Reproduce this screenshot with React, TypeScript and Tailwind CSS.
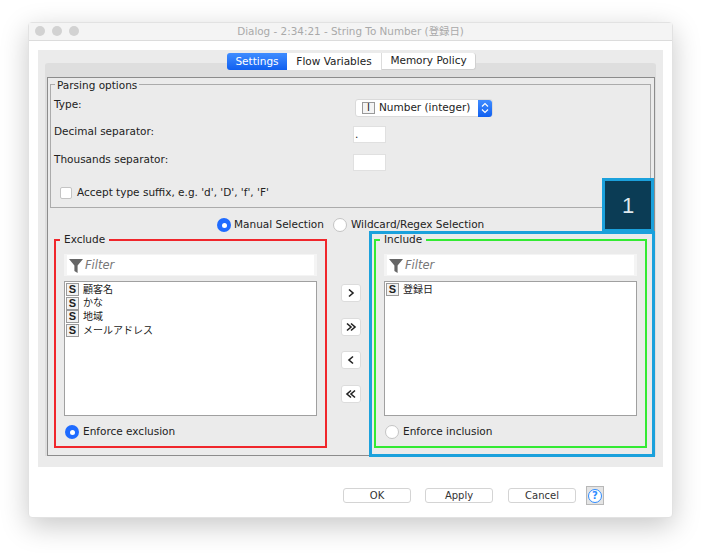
const FONT = "font-['DejaVu_Sans','Noto_Sans_CJK_JP',sans-serif]";

const Radio = ({ on }: { on?: boolean }) =>
  on ? (
    <span className="flex h-[14px] w-[14px] shrink-0 items-center justify-center rounded-full bg-[#1f6bff]">
      <span className="h-[5px] w-[5px] rounded-full bg-white" />
    </span>
  ) : (
    <span className="h-[14px] w-[14px] shrink-0 rounded-full border border-[#c4c4c4] bg-white" />
  );

const FunnelIcon = () => (
  <svg width="14" height="15" viewBox="0 0 14 15" className="shrink-0">
    <path d="M0 1h14L8.6 7.4V15L5.4 13V7.4z" fill="#666" />
  </svg>
);

const ColumnRow = ({ name }: { name: string }) => (
  <div className="flex h-[13.6px] items-center">
    <span className="ml-[1px] flex h-[13px] w-[13px] items-center justify-center border border-[#9a9a9a] bg-[#f2f2f2] font-['Liberation_Sans'] text-[11px] leading-none font-bold text-[#222]">
      S
    </span>
    <span className="ml-[4px] text-[10px] leading-none text-[#222]">{name}</span>
  </div>
);

const ColumnBox = ({
  title,
  color,
  items,
  enforce,
  on,
}: {
  title: string;
  color: string;
  items: string[];
  enforce: string;
  on?: boolean;
}) => (
  <div className={`relative h-[209px] w-[273px] border-2 ${color} px-[8px] pt-[13px]`}>
    <span className="absolute top-[-9px] left-[4px] bg-[#ebebeb] px-[4px] text-[10.5px] leading-[14px] text-[#222]">{title}</span>
    <div className="flex h-[22px] items-center gap-[2px] border-x-[3px] border-y border-[#f4f4f4] bg-white pt-[1px] pl-[2px] text-[11.5px] text-[#777] italic">
      <FunnelIcon />
      Filter
    </div>
    <div className="mt-[5px] h-[135px] border border-[#a0a0a0] bg-white pt-[1px]">
      {items.map((item) => (
        <ColumnRow key={item} name={item} />
      ))}
    </div>
    <div className="mt-[9px] flex h-[14px] items-center gap-[4px] pl-[1px] text-[10.5px] text-[#222]">
      <Radio on={on} />
      {enforce}
    </div>
  </div>
);

const ArrowButton = ({ d }: { d: string }) => (
  <div className="flex h-[18px] w-[20px] items-center justify-center rounded-[3px] border border-[#dcdcdc] bg-white">
    <svg width="12" height="10" viewBox="0 0 12 10" fill="none" stroke="#222" strokeWidth="1.6">
      <path d={d} />
    </svg>
  </div>
);

const FooterButton = ({ label }: { label: string }) => (
  <div className="flex h-[15px] w-[68px] items-center justify-center rounded-[3px] border border-[#d4d4d4] bg-white text-[10px] text-[#333]">
    {label}
  </div>
);

const App = () => {
  return (
    <div className={`relative h-[553px] w-[701px] overflow-hidden bg-white pt-[22px] pl-[28px] ${FONT}`}>
      <div className="flex h-[496px] w-[645px] flex-col rounded-[4px] border border-[#e2e2e2] bg-white shadow-[0_8px_28px_rgba(0,0,0,0.22)]">
        {/* title bar */}
        <div className="relative flex h-[18px] shrink-0 items-center justify-center border-b border-[#dcdcdc] bg-[#f4f4f4] text-[10.4px] text-[#a9a9a9]">
          <div className="absolute top-[3px] left-[6px] flex gap-[7px]">
            <span className="h-[10px] w-[10px] rounded-full bg-[#d2d2d2]" />
            <span className="h-[10px] w-[10px] rounded-full bg-[#d2d2d2]" />
            <span className="h-[10px] w-[10px] rounded-full bg-[#d2d2d2]" />
          </div>
          Dialog - 2:34:21 - String To Number (登録日)
        </div>

        {/* main panel */}
        <div className="mt-[9px] ml-[9px] h-[417px] w-[625px] bg-[#ebebeb] pt-[3px]">
          <div className="relative z-10 -mb-[7px] flex h-[17px] pl-[189px] text-[10.5px] text-[#222]">
            <div className="flex w-[60px] items-center justify-center rounded-l-[3px] bg-gradient-to-b from-[#3f8cff] to-[#0f5ff0] font-medium text-white">
              Settings
            </div>
            <div className="flex w-[95px] items-center justify-center border-r border-[#dcdcdc] bg-white">Flow Variables</div>
            <div className="flex w-[94px] items-center justify-center rounded-r-[3px] border-r border-b border-[#d0d0d0] bg-white">Memory Policy</div>
          </div>

          <div className="mx-[7px] rounded-t-[3px] bg-[#dedede] px-[2px] pt-[14px]">
            <div className="h-[379px] w-[608px] border border-[#8c8c8c] bg-[#ebebeb] px-[2px] pt-[6px]">
              {/* parsing options */}
              <div className="relative h-[124px] w-[601px] border border-[#ababab] text-[10.5px] text-[#222]">
                <span className="absolute top-[-7px] left-[4px] bg-[#ebebeb] px-[2px] leading-[14px]">Parsing options</span>
                <div className="grid grid-cols-[299px_1fr] pt-[14px] pl-[3px]">
                  <span className="-mt-[2px] h-[29px] leading-[14px]">Type:</span>
                  <div className="ml-[2px] flex h-[18px] w-[138px] items-center rounded-[3px] border border-[#dadada] bg-white pl-[6px]">
                    <span className="flex h-[12px] w-[13px] items-center justify-center border border-[#999] bg-[#f4f4f4] text-[10px] leading-none">I</span>
                    <span className="ml-[4px] flex-1">Number (integer)</span>
                    <span className="flex h-[17px] w-[14px] items-center justify-center rounded-r-[3px] bg-gradient-to-b from-[#3f8cff] to-[#0f5ff0]">
                      <svg width="8" height="12" viewBox="0 0 8 12" fill="none" stroke="#fff" strokeWidth="1.2">
                        <path d="M1 4.5 4 1.5 7 4.5M1 7.5 4 10.5 7 7.5" />
                      </svg>
                    </span>
                  </div>
                  <span className="-mt-[2px] h-[30px] leading-[14px]">Decimal separator:</span>
                  <div className="h-[17px] w-[33px] border border-[#e0e0e0] bg-white pl-[1px] leading-[14px]">.</div>
                  <span className="-mt-[2px] h-[30px] leading-[14px]">Thousands separator:</span>
                  <div className="h-[17px] w-[33px] border border-[#e0e0e0] bg-white" />
                </div>
                <div className="mt-[3px] flex items-center gap-[5px] pl-[9px]">
                  <span className="h-[12px] w-[12px] rounded-[2px] border border-[#c4c4c4] bg-white" />
                  Accept type suffix, e.g. 'd', 'D', 'f', 'F'
                </div>
              </div>

              {/* selection mode */}
              <div className="mt-[10px] flex h-[14px] items-center pl-[167px] text-[10.5px] text-[#222]">
                <Radio on />
                <span className="ml-[3px]">Manual Selection</span>
                <span className="ml-[9px] flex">
                  <Radio />
                </span>
                <span className="ml-[4px]">Wildcard/Regex Selection</span>
              </div>

              {/* column filter */}
              <div className="mt-[7px] flex pl-[4px]">
                <ColumnBox
                  title="Exclude"
                  color="border-[#f0262b]"
                  items={["顧客名", "かな", "地域", "メールアドレス"]}
                  enforce="Enforce exclusion"
                  on
                />
                <div className="flex w-[47px] flex-col items-center gap-[15.5px] pt-[45px]">
                  <ArrowButton d="M4 1.5 8 5 4 8.5" />
                  <ArrowButton d="M2 1.5 6 5 2 8.5M6 1.5 10 5 6 8.5" />
                  <ArrowButton d="M8 1.5 4 5 8 8.5" />
                  <ArrowButton d="M6 1.5 2 5 6 8.5M10 1.5 6 5 10 8.5" />
                </div>
                <ColumnBox title="Include" color="border-[#33ea33]" items={["登録日"]} enforce="Enforce inclusion" />
              </div>
            </div>
          </div>
        </div>

        {/* footer */}
        <div className="mt-[19px] flex items-center pl-[314px]">
          <FooterButton label="OK" />
          <span className="ml-[14px]">
            <FooterButton label="Apply" />
          </span>
          <span className="ml-[15px]">
            <FooterButton label="Cancel" />
          </span>
          <div className="ml-[10px] flex h-[19px] w-[18px] items-center justify-center border border-[#b8b8b8] bg-[#e4e4e4]">
            <span className="flex h-[14px] w-[14px] items-center justify-center rounded-full border-[1.5px] border-[#2f8cff] bg-white text-[10px] leading-none font-bold text-[#2f8cff]">
              ?
            </span>
          </div>
        </div>
      </div>

      {/* annotation overlay */}
      <div className="absolute top-[178px] left-[602px] flex h-[54px] w-[52px] items-center justify-center border-[3px] border-[#1ba1dc] bg-[#0b3c55] font-['Liberation_Sans'] text-[22px] text-[#dfe8ee]">
        1
      </div>
      <div className="absolute top-[231px] left-[369px] h-[226px] w-[286px] border-[3px] border-[#1ba1dc]" />
    </div>
  );
};

export default App;
